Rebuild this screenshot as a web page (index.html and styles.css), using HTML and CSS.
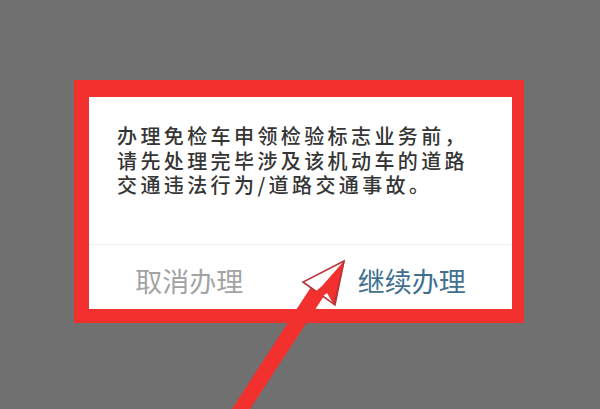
FILE: index.html
```html
<!DOCTYPE html>
<html lang="zh-CN">
<head>
<meta charset="utf-8">
<title>提示</title>
<link rel="stylesheet" href="styles.css">
</head>
<body>
<div class="frame">
  <div class="dialog">
    <div class="msg">
      <div class="line">办理免检车申领检验标志业务前，</div>
      <div class="line">请先处理完毕涉及该机动车的道路</div>
      <div class="line">交通违法行为/道路交通事故。</div>
    </div>
    <div class="actions">
      <div class="btn cancel">取消办理</div>
      <div class="btn ok">继续办理</div>
    </div>
  </div>
</div>
<svg class="arrow" width="600" height="409" viewBox="0 0 600 409" xmlns="http://www.w3.org/2000/svg">
  <polygon points="232,409 250,409 324,296 311,287" fill="#f2302e"/>
  <polygon points="344,261 303,282 335,305" fill="#ffffff" stroke="#b8353a" stroke-width="1.6" stroke-linejoin="miter"/>
  <polygon points="306,300 322,286 344,261 334,305 327,293 318,300" fill="#f2302e"/>
  <line x1="344" y1="261" x2="334" y2="305" stroke="#b8353a" stroke-width="1.4"/>
</svg>
</body>
</html>
```
FILE: styles.css
```css
html, body {
  margin: 0;
  padding: 0;
}
body {
  width: 600px;
  height: 409px;
  overflow: hidden;
  background: #707070;
  font-family: "Noto Sans CJK SC", "Noto Sans", sans-serif;
  position: relative;
  padding-top: 80px;
  box-sizing: border-box;
}
.frame {
  margin-left: 74px;
  width: 450px;
  box-sizing: border-box;
  border-style: solid;
  border-color: #f2302e;
  border-width: 17px 12px 14px 15px;
}
.dialog {
  background: #ffffff;
  height: 212px;
  display: flex;
  flex-direction: column;
}
.msg {
  height: 148px;
  box-sizing: border-box;
  padding: 27px 0 0 28px;
  font-size: 20px;
  font-weight: 500;
  letter-spacing: 3.4px;
  color: #353535;
  white-space: nowrap;
  border-bottom: 1px solid #eeeeee;
}
.line {
  height: 24.5px;
  line-height: 24.5px;
}
.actions {
  flex: 1;
  display: flex;
}
.btn {
  flex: 1;
  display: flex;
  align-items: center;
  justify-content: center;
  font-size: 27px;
  padding-top: 6px;
}
.cancel {
  color: #a3a3a3;
  padding-right: 12px;
}
.ok {
  color: #41708f;
  padding-left: 10px;
}
.arrow {
  position: absolute;
  left: 0;
  top: 0;
}
```
